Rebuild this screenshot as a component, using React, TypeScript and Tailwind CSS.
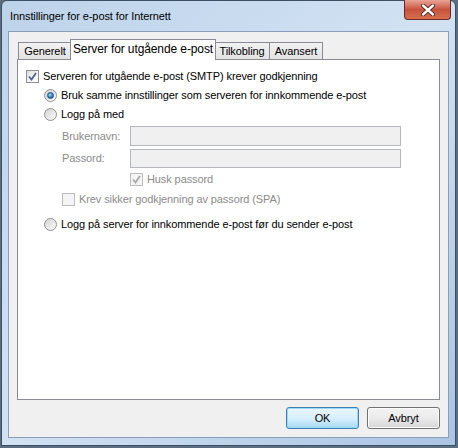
import { useState } from "react";

const font = { fontFamily: '"Liberation Sans", Arial, sans-serif' };

const Check = ({ checked, disabled }: { checked?: boolean; disabled?: boolean }) => (
    <span
        className={
            "flex h-[13px] w-[13px] shrink-0 items-center justify-center border " +
            (disabled
                ? "border-[#bcbcbc] bg-[#f4f4f4]"
                : "border-[#8e8f8f] bg-gradient-to-br from-[#dcdcdc] via-[#f4f4f4] to-[#ffffff]")
        }
    >
        {checked && (
            <svg width="9" height="9" viewBox="0 0 9 9">
                <path
                    d="M1 4.5 L3.5 7.5 L8 1"
                    fill="none"
                    stroke={disabled ? "#a8a8a8" : "#4a5f97"}
                    strokeWidth="1.8"
                />
            </svg>
        )}
    </span>
);

const Radio = ({ checked }: { checked?: boolean }) => (
    <span className="flex h-[13px] w-[13px] shrink-0 items-center justify-center rounded-full border border-[#8e8f8f] bg-gradient-to-br from-[#d4d4d4] to-[#fbfbfb]">
        {checked && (
            <span className="h-[7px] w-[7px] rounded-full border border-[#1b4f7c] bg-[radial-gradient(circle_at_40%_35%,#9fdcfb,#2c7cbf_60%,#1a4f86)]" />
        )}
    </span>
);

export default function App() {
    const [opt] = useState("same");
    return (
        <div className="h-[448px] w-[458px] bg-[#5b6d80] text-[11px] leading-[15px] tracking-[-0.1px]" style={font}>
            <div className="relative ml-[1px] h-[446px] w-[455px] rounded-t-[6px] border border-[#3d4f63] bg-gradient-to-br from-[#bdd3ea] via-[#d2e2f3] to-[#aac4e2]">
                <div className="flex h-[30px] items-center pl-[8px] text-black">
                    Innstillinger for e-post for Internett
                </div>
                <div className="absolute right-[4px] top-[-1px] flex h-[20px] w-[47px] items-center justify-center rounded-b-[4px] border border-t-0 border-[#6b2a22] bg-gradient-to-b from-[#e8a597] via-[#c8523c] to-[#d76e4f]">
                    <svg width="14" height="12" viewBox="0 0 14 12">
                        <path d="M2 1.5 L12 10.5 M12 1.5 L2 10.5" stroke="#3a1a14" strokeWidth="4" strokeLinecap="round" />
                        <path d="M2 1.5 L12 10.5 M12 1.5 L2 10.5" stroke="#ffffff" strokeWidth="2.4" strokeLinecap="round" />
                    </svg>
                </div>
                <div className="mx-[6px] flex h-[407px] flex-col border border-[#8a9fb7] bg-[#f0f0f0] px-[8px] pt-[7px]">
                    <div className="flex items-end whitespace-nowrap pl-[1px] text-black">
                        <div className="flex h-[17px] w-[54px] items-center justify-center border border-b-0 border-[#898c95] bg-gradient-to-b from-[#f2f2f2] to-[#e3e3e3]">
                            Generelt
                        </div>
                        <div className="relative z-10 -mb-px -mx-[2px] flex h-[21px] w-[146px] items-start justify-center border border-b-0 border-[#898c95] bg-white pt-[2px] text-[12px]">
                            Server for utgående e-post
                        </div>
                        <div className="flex h-[17px] w-[56px] items-center justify-center border border-b-0 border-[#898c95] bg-gradient-to-b from-[#f2f2f2] to-[#e3e3e3]">
                            Tilkobling
                        </div>
                        <div className="flex h-[17px] w-[53px] items-center justify-center border border-b-0 border-l-0 border-[#898c95] bg-gradient-to-b from-[#f2f2f2] to-[#e3e3e3]">
                            Avansert
                        </div>
                    </div>
                    <div className="flex h-[341px] flex-col whitespace-nowrap border border-[#898c95] bg-white pl-[8px] pr-[38px] pt-[10px] text-black">
                        <label className="flex h-[13px] items-center gap-[4px]">
                            <Check checked />
                            <span>Serveren for utgående e-post (SMTP) krever godkjenning</span>
                        </label>
                        <div className="flex flex-col pl-[18px]">
                            <label className="mt-[6px] flex h-[13px] items-center gap-[4px]">
                                <Radio checked={opt === "same"} />
                                <span>Bruk samme innstillinger som serveren for innkommende e-post</span>
                            </label>
                            <label className="mt-[6px] flex h-[13px] items-center gap-[4px]">
                                <Radio checked={opt === "login"} />
                                <span>Logg på med</span>
                            </label>
                            <div className="mt-[5px] flex flex-col gap-[3px] pl-[18px] text-[#8b8b8b]">
                                <div className="flex h-[20px] items-center">
                                    <span className="w-[68px]">Brukernavn:</span>
                                    <div className="h-[20px] flex-1 border border-[#b5b8bd] bg-[#f0f0f0]" />
                                </div>
                                <div className="flex h-[19px] items-center">
                                    <span className="w-[68px]">Passord:</span>
                                    <div className="h-[19px] flex-1 border border-[#b5b8bd] bg-[#f0f0f0]" />
                                </div>
                                <label className="mt-[2px] flex h-[13px] items-center gap-[4px] pl-[68px]">
                                    <Check checked disabled />
                                    <span>Husk passord</span>
                                </label>
                                <label className="mt-[4px] flex h-[13px] items-center gap-[4px]">
                                    <Check disabled />
                                    <span>Krev sikker godkjenning av passord (SPA)</span>
                                </label>
                            </div>
                            <label className="mt-[12px] flex h-[13px] items-center gap-[4px]">
                                <Radio checked={opt === "incoming"} />
                                <span>Logg på server for innkommende e-post før du sender e-post</span>
                            </label>
                        </div>
                    </div>
                    <div className="mt-[7px] flex justify-end gap-[8px]">
                        <button className="h-[22px] w-[73px] rounded-[3px] border border-[#3c7fb1] bg-gradient-to-b from-[#eaf6fd] via-[#d9f0fc] to-[#a7d9f5] text-black shadow-[inset_0_0_0_1px_#9fd7f6]">
                            OK
                        </button>
                        <button className="h-[22px] w-[73px] rounded-[3px] border border-[#707070] bg-gradient-to-b from-[#f2f2f2] via-[#ebebeb] to-[#d6d6d6] text-black shadow-[inset_0_0_0_1px_#fcfcfc]">
                            Avbryt
                        </button>
                    </div>
                </div>
            </div>
        </div>
    );
}
